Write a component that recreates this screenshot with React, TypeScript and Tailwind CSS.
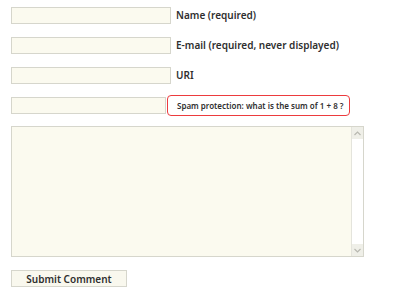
import React from "react";

const FONT = "font-['Noto_Sans','Open_Sans',sans-serif]";

function Field({ label }: { label: string }) {
  return (
    <div className="flex items-center h-[17px]">
      <input
        type="text"
        className="h-[17px] w-[160px] border border-[#d6d6cc] bg-[#fbfaef] outline-none"
      />
      <span className="ml-[5px] text-[10px] text-[#2f2f2f] font-semibold">{label}</span>
    </div>
  );
}

export default function App() {
  return (
    <div className={`w-[393px] h-[295px] bg-white ${FONT}`}>
      <form className="flex flex-col pl-[11px] pt-[7px]">
        <div className="flex flex-col gap-[13px]">
          <Field label="Name (required)" />
          <Field label="E-mail (required, never displayed)" />
          <Field label="URI" />
          <div className="flex items-center h-[17px]">
            <input
              type="text"
              className="h-[17px] w-[155px] border border-[#d6d6cc] bg-[#fbfaef] outline-none"
            />
            <span className="ml-[1px] h-[21px] w-[183px] flex items-center pl-[9px] border border-[#ec3b3e] rounded-[4px] text-[8px] text-[#2f2f2f] font-semibold whitespace-nowrap">
              Spam protection: what is the sum of 1 + 8 ?
            </span>
          </div>
        </div>

        <div className="mt-[12px] flex w-[353px] h-[131px] border border-[#d6d6cc] bg-[#fbfaef]">
          <textarea className="flex-1 resize-none bg-transparent outline-none" />
          <div className="w-[12px] flex flex-col border-l border-[#e4e4dc]">
            <div className="h-[12px] flex items-center justify-center bg-[#efefe8]">
              <svg width="7" height="5" viewBox="0 0 7 5" fill="none" stroke="#b8b8b0" strokeWidth="1.2">
                <path d="M0.5 4 L3.5 1 L6.5 4" />
              </svg>
            </div>
            <div className="flex-1 bg-white" />
            <div className="h-[12px] flex items-center justify-center bg-[#efefe8]">
              <svg width="7" height="5" viewBox="0 0 7 5" fill="none" stroke="#b8b8b0" strokeWidth="1.2">
                <path d="M0.5 1 L3.5 4 L6.5 1" />
              </svg>
            </div>
          </div>
        </div>

        <button
          type="button"
          className="mt-[13px] w-[116px] h-[17px] border border-[#d6d6cc] bg-[#f9f8ee] text-[10px] font-semibold text-[#2f2f2f] leading-none"
        >
          Submit Comment
        </button>
      </form>
    </div>
  );
}
